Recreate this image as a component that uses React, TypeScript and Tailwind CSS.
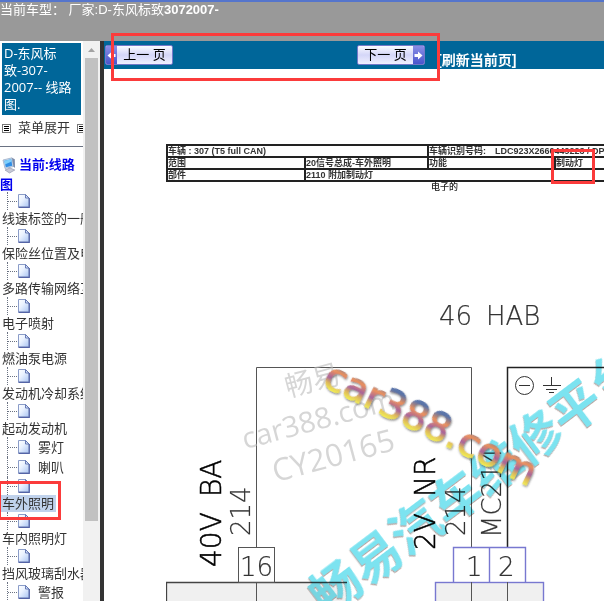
import type { ReactNode } from "react";

type TreeItem = { label: string; inline?: boolean; active?: boolean };

const items: TreeItem[] = [
  { label: "线速标签的一般说明" },
  { label: "保险丝位置及电路" },
  { label: "多路传输网络互连" },
  { label: "电子喷射" },
  { label: "燃油泵电源" },
  { label: "发动机冷却系统" },
  { label: "起动发动机" },
  { label: "雾灯", inline: true },
  { label: "喇叭", inline: true },
  { label: "车外照明", active: true },
  { label: "车内照明灯" },
  { label: "挡风玻璃刮水器" },
  { label: "警报", inline: true },
];

function PageIcon() {
  return (
    <svg width="14" height="14" viewBox="0 0 14 14" className="shrink-0">
      <defs>
        <linearGradient id="sheet" x1="0" y1="0" x2="1" y2="1">
          <stop offset="0" stopColor="#ffffff" />
          <stop offset="0.4" stopColor="#eaf2ff" />
          <stop offset="1" stopColor="#a9c4f2" />
        </linearGradient>
      </defs>
      <path d="M1.5 0.5H8.5L12 4V13H1.5Z" fill="url(#sheet)" stroke="#8a9cc8" />
      <path d="M12.3 4V13.3H1.5" fill="none" stroke="#5464a6" strokeWidth="1.2" />
      <path d="M8.5 0.5V4H12Z" fill="#d5e2fb" stroke="#5c70ae" strokeWidth="0.9" />
    </svg>
  );
}

function ComputerIcon() {
  return (
    <svg width="14" height="17" viewBox="0 0 14 17" className="inline-block align-middle">
      <path d="M1 3L10 0.8L11.5 9.5L3 11.5Z" fill="#cfdcec" stroke="#91a5c2" strokeWidth="0.7" />
      <path d="M2.3 3.8L9.2 2.2L10.3 8.8L3.8 10.3Z" fill="#2f8ee6" />
      <path d="M2.3 3.8L9.2 2.2L9.6 4.6L3 7.4Z" fill="#7fd0fb" />
      <path d="M10 0.8L12.8 2.3L13 11L11.5 9.5Z" fill="#7b8aa8" />
      <path d="M3 13L8 11L12.8 13L7.5 16Z" fill="#c7cad6" stroke="#868ba5" strokeWidth="0.6" />
    </svg>
  );
}

function ListIcon() {
  return (
    <svg width="9" height="9" viewBox="0 0 9 9" className="shrink-0">
      <rect x="0.5" y="0.5" width="8" height="8" fill="#fff" stroke="#777" />
      <path d="M2 2.5H7M2 4.5H7M2 6.5H7" stroke="#000" />
    </svg>
  );
}

function TreeRow({ item }: { item: TreeItem }) {
  return (
    <li className="whitespace-nowrap">
      <a href="#" className={item.inline ? "flex h-5 items-center" : "block h-[35px]"}>
        <span className={`ml-[7px] flex items-center border-l border-dotted border-gray-500 ${item.inline ? "h-5" : "h-[18px]"}`}>
          <span className="w-[9px] border-t border-dotted border-gray-500" />
          <PageIcon />
        </span>
        {item.inline ? (
          <span className="ml-[7px] leading-5">{item.label}</span>
        ) : (
          <span className={`inline-block pr-[2px] pl-[2px] align-top leading-[17px] ${item.active ? "bg-[#c0d2ec]" : ""}`}>
            {item.label}
          </span>
        )}
      </a>
    </li>
  );
}

function Sidebar() {
  return (
    <aside className="flex w-[100px] shrink-0 bg-white text-[13px] text-[#333]">
      <div className="w-[83px] overflow-hidden">
        <h1 className="mt-[2px] mr-[2px] ml-[2px] bg-[#006699] px-[2px] py-[2px] leading-[17px] text-white">
          D-东风标
          <br />
          致-307-
          <br />
          2007-- 线路
          <br />
          图.
        </h1>
        <div className="flex h-[26px] items-center gap-[7px] pl-[2px] whitespace-nowrap">
          <ListIcon />
          <button type="button">菜单展开</button>
          <ListIcon />
        </div>
        <hr className="mt-[5px] border-gray-500" />
        <a href="#" className="mt-[7px] block leading-5 font-bold text-[#0000ee]">
          <span className="pr-[3px] pl-[2px]">
            <ComputerIcon />
          </span>
          当前:线路
          <br />
          图
        </a>
        <ul className="-mt-[2px]">
          {items.map((item) => (
            <TreeRow key={item.label} item={item} />
          ))}
        </ul>
      </div>
      <div className="flex flex-1 flex-col items-center bg-[#f1f1f1]">
        <svg width="7" height="17" viewBox="0 0 7 17">
          <path d="M0 11L3.5 7L7 11Z" fill="#a3a3a3" />
        </svg>
        <div className="h-[463px] w-[13px] bg-[#c1c1c1]" />
      </div>
    </aside>
  );
}

function Arrow({ flip }: { flip?: boolean }) {
  return (
    <span className="flex h-full w-[11px] items-center justify-center bg-linear-to-b from-[#8b8ee6] to-[#4a55cc]">
      <svg width="9" height="9" viewBox="0 0 9 9" className={flip ? "rotate-180" : ""}>
        <path d="M0.5 3H4V0.5L8.5 4.5L4 8.5V6H0.5Z" fill="#fff" />
      </svg>
    </span>
  );
}

function NavButton({ children }: { children: ReactNode }) {
  return (
    <button
      type="button"
      className="flex h-5 w-[68px] items-center justify-between overflow-hidden rounded-xs border border-[#7378c8] bg-linear-to-b from-[#fbfbff] via-[#d4d6f8] to-[#f0f0ff] text-[13px] text-black"
    >
      {children}
    </button>
  );
}

function Toolbar() {
  return (
    <nav className="flex h-7 items-center bg-[#006699] pl-[1px]">
      <NavButton>
        <Arrow flip />
        <span className="flex-1">上一 页</span>
      </NavButton>
      <div className="ml-[184px]">
        <NavButton>
          <span className="flex-1">下一 页</span>
          <Arrow />
        </NavButton>
      </div>
      <a href="#" className="ml-3 self-end text-sm leading-[18px] font-bold whitespace-nowrap text-white">
        [刷新当前页]
      </a>
    </nav>
  );
}

function InfoTable() {
  return (
    <table className="w-[480px] table-fixed border-collapse border-2 border-[#222] text-[9px] leading-[10px] font-bold whitespace-nowrap text-[#333]">
      <colgroup>
        <col className="w-[138px]" />
        <col className="w-[123px]" />
        <col className="w-[127px]" />
        <col />
      </colgroup>
      <tbody>
        <tr className="h-3 border-b-2 border-[#222]">
          <td colSpan={2} className="border-r-2 border-[#222] p-0">车辆 : 307 (T5 full CAN)</td>
          <td colSpan={2} className="p-0">
            <span className="mr-[9px]">车辆识别号码:</span>LDC923X2660449223 / DPR
          </td>
        </tr>
        <tr className="h-3 border-b-2 border-[#222]">
          <td className="border-r-2 border-[#222] p-0">范围</td>
          <td className="border-r-2 border-[#222] p-0">20信号总成-车外照明</td>
          <td className="border-r-2 border-[#222] p-0">功能</td>
          <td className="p-0">制动灯</td>
        </tr>
        <tr className="h-3">
          <td className="border-r-2 border-[#222] p-0">部件</td>
          <td colSpan={3} className="p-0">2110 附加制动灯</td>
        </tr>
      </tbody>
    </table>
  );
}

function Diagram() {
  return (
    <svg width="480" height="401" viewBox="166 200 480 401" className="block max-w-none">
      <defs>
        <linearGradient id="rainbow" x1="0" y1="-27" x2="0" y2="0" gradientUnits="userSpaceOnUse">
          <stop offset="0" stopColor="#5470a8" />
          <stop offset="0.3" stopColor="#f09058" />
          <stop offset="0.6" stopColor="#a8609c" />
          <stop offset="0.8" stopColor="#e0b858" />
          <stop offset="1" stopColor="#f4ec50" />
        </linearGradient>
        <filter id="shade" x="-10%" y="-30%" width="120%" height="160%">
          <feDropShadow dx="1" dy="1" stdDeviation="1" floodColor="#555" floodOpacity="0.8" />
        </filter>
        <filter id="edge" x="-10%" y="-30%" width="120%" height="160%">
          <feDropShadow dx="-1" dy="1" stdDeviation="0.5" floodColor="#b09c98" floodOpacity="0.9" />
        </filter>
      </defs>

      {/* connectors */}
      <path d="M166.5 601V582.5H347V601Z" fill="#f0f0f0" />
      <path d="M166.5 601V582.5H347" fill="none" stroke="#444" strokeWidth="1.3" />
      <rect x="435.5" y="582.5" width="108" height="30" fill="#f0f0f0" stroke="#7878d0" strokeWidth="1.4" />
      <g fill="none" stroke="#555">
        <rect x="238.5" y="547.5" width="36" height="35" />
        <path d="M256.5 547V367.5H471.5V547" />
        <path d="M256.5 582V601M471.5 582V601M507.5 582V601" />
      </g>
      <path d="M507.5 547V367.5H646" fill="none" stroke="#222" strokeWidth="1.5" />
      <path d="M453.5 582V547.5H525.5V582M489.5 547V582" fill="none" stroke="#7878d0" strokeWidth="1.4" />

      {/* ground symbol */}
      <g fill="none" stroke="#333">
        <circle cx="524.5" cy="385.5" r="9" />
        <path d="M519 385.5H530M551.5 377V386M543 385.5H561M546 389.5H557M549 392.5H554" />
      </g>

      {/* wire labels */}
      <g fontFamily="DejaVu Sans" fontWeight="200" fontSize="26" fill="#333" stroke="#333" strokeWidth="0.2">
        <text x="439" y="325">46</text>
        <text x="486" y="325">HAB</text>
        <text x="240" y="576">16</text>
        <text x="466" y="576">1</text>
        <text x="498" y="576">2</text>
        <text transform="translate(250 536) rotate(-90)">214</text>
        <text transform="translate(465 536) rotate(-90)">214</text>
        <text transform="translate(501 538) rotate(-90)">MC214</text>
      </g>
      <g fontFamily="DejaVu Sans" fontWeight="200" fontSize="28" fill="#000" stroke="#000" strokeWidth="0.5">
        <text transform="translate(221 567) rotate(-90)">40V</text>
        <text transform="translate(221 497) rotate(-90)">BA</text>
        <text transform="translate(435 550) rotate(-90)">2V</text>
        <text transform="translate(435 497) rotate(-90)">NR</text>
      </g>

      {/* watermarks */}
      <g fontFamily="Open Sans, Noto Sans CJK SC, sans-serif" fill="#bbb" fillOpacity="0.6" textAnchor="middle">
        <text transform="translate(315 390) rotate(-15)" fontSize="28">畅易</text>
        <text transform="translate(321 429) rotate(-15)" fontSize="29">car388.com</text>
        <text transform="translate(336 466) rotate(-15)" fontSize="31">CY20165</text>
      </g>
      <text
        className="mix-blend-multiply"
        transform="translate(327 617) rotate(-37)"
        fontFamily="Noto Sans CJK SC, sans-serif"
        fontWeight="700"
        fontSize="50"
        fill="#7be3f0"
        filter="url(#edge)"
      >
        畅易汽车维修平台
      </text>
      <text
        transform="translate(321 385) rotate(26)"
        fontFamily="DejaVu Sans"
        fontSize="39"
        fill="url(#rainbow)"
        fillOpacity="0.9"
        stroke="url(#rainbow)"
        strokeWidth="1"
        filter="url(#shade)"
      >
        car388.com
      </text>
    </svg>
  );
}

export default function App() {
  return (
    <div className="relative flex h-screen flex-col overflow-hidden bg-white font-['Open_Sans','Noto_Sans_CJK_SC',sans-serif]">
      <header className="h-[41px] shrink-0 border-t-2 border-[#5575cc] bg-[#999] font-['Liberation_Sans','Noto_Sans_CJK_SC',sans-serif] text-[13px] leading-[15px] whitespace-pre text-white">
        当前车型： 厂家:D-东风标致<b>3072007-</b>
      </header>
      <div className="flex min-h-0 flex-1">
        <Sidebar />
        <main className="min-w-0 flex-1 overflow-hidden border-l-4 border-[#333] bg-white font-['Liberation_Sans','Noto_Sans_CJK_SC',sans-serif]">
          <Toolbar />
          <div className="mt-[75px] ml-[62px]">
            <InfoTable />
            <p className="pl-[265px] text-[9px] leading-[10px] font-medium text-[#222]">电子的</p>
            <div className="mt-2">
              <Diagram />
            </div>
          </div>
        </main>
      </div>

      {/* callouts */}
      <div className="pointer-events-none absolute top-[33px] left-[111px] h-12 w-[329px] border-3 border-[#fb3b3b]" />
      <div className="pointer-events-none absolute top-[149px] left-[551px] h-[35px] w-11 border-3 border-[#fb3b3b]" />
      <div className="pointer-events-none absolute top-[481px] left-[-2px] h-[39px] w-[63px] border-3 border-[#fb3b3b]" />
    </div>
  );
}
